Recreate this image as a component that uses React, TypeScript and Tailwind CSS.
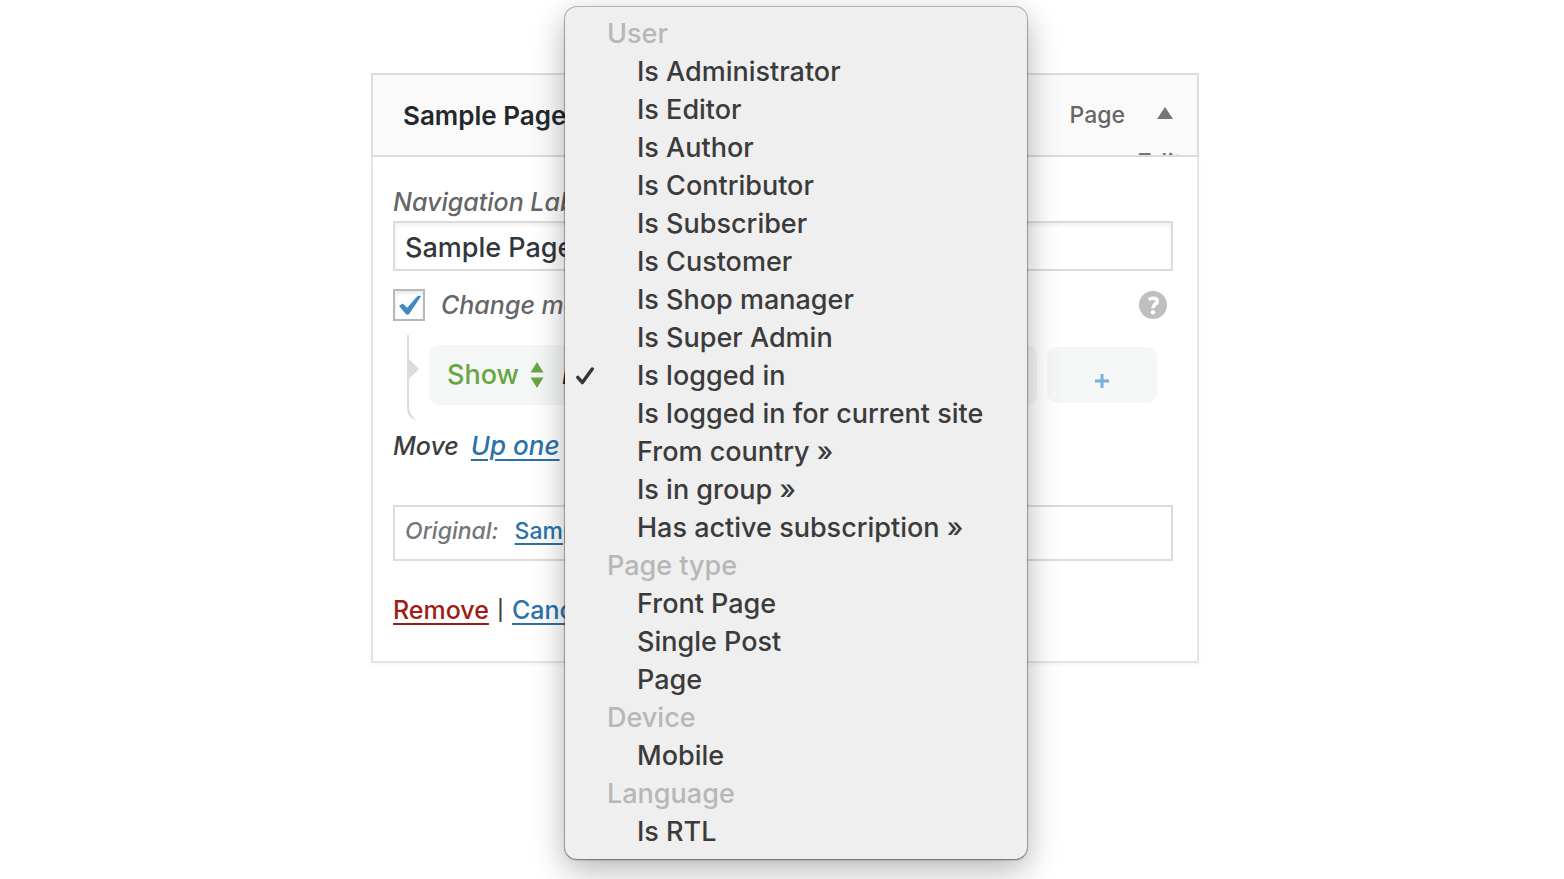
import { useState } from "react";

const groups = [
  {
    label: "User",
    items: [
      "Is Administrator",
      "Is Editor",
      "Is Author",
      "Is Contributor",
      "Is Subscriber",
      "Is Customer",
      "Is Shop manager",
      "Is Super Admin",
      "Is logged in",
      "Is logged in for current site",
      "From country »",
      "Is in group »",
      "Has active subscription »",
    ],
  },
  { label: "Page type", items: ["Front Page", "Single Post", "Page"] },
  { label: "Device", items: ["Mobile"] },
  { label: "Language", items: ["Is RTL"] },
];

function ConditionMenu() {
  const [selected, setSelected] = useState("Is logged in");
  return (
    <div
      role="listbox"
      aria-label="Condition"
      className="absolute -top-[66px] left-[194px] z-10 w-[462px] rounded-xl bg-[#efefef] py-2 text-[27px] leading-[38px] text-[#3b3b3b] shadow-[0_0_0_1px_rgba(0,0,0,0.24),0_1px_2px_rgba(0,0,0,0.3),0_10px_32px_rgba(0,0,0,0.3)]"
    >
      {groups.map((group) => (
        <div key={group.label} role="group" aria-label={group.label}>
          <div className="pl-[42px] text-[#b7b7b7]">{group.label}</div>
          {group.items.map((item) => (
            <button
              key={item}
              type="button"
              role="option"
              aria-selected={item === selected}
              onClick={() => setSelected(item)}
              className="flex w-full items-center text-left whitespace-nowrap"
            >
              <span className="flex w-[72px] shrink-0 pl-[11px]">
                {item === selected && (
                  <svg width="18" height="18" viewBox="0 0 18 18" fill="none" aria-hidden="true">
                    <path d="M1.8 10.4 6.4 15.6 16.2 2" stroke="#353535" strokeWidth="3.4" strokeLinecap="round" strokeLinejoin="round" />
                  </svg>
                )}
              </span>
              {item}
            </button>
          ))}
        </div>
      ))}
    </div>
  );
}

export default function App() {
  const [changed, setChanged] = useState(true);
  return (
    <main className="flex min-h-screen justify-center bg-white pt-[73px] pl-1.5 font-['Inter','Liberation_Sans',sans-serif] text-[25px] leading-[34px] font-medium text-[#3c3c3c]">
      <section className="relative h-fit w-full max-w-[828px]">
        <header className="flex h-[84px] items-start justify-between overflow-hidden border-2 border-[#dcdcdc] bg-[#fafafa] pr-6 pl-[30px]">
          <h2 className="pt-6 text-[26px] font-semibold text-[#23282d]">Sample Page</h2>
          <div className="flex">
            <span className="pt-[23px] text-[23px] text-[#666]">Page</span>
            <button type="button" className="flex w-12 flex-col items-end pt-8 text-[25px] text-[#72777c]">
              <svg width="16" height="12" viewBox="0 0 16 12" aria-hidden="true">
                <path d="M8 0 16 12H0Z" fill="#72777c" />
              </svg>
              <span className="mt-[27px] self-start pl-3">Edit</span>
            </button>
          </div>
        </header>

        <form
          onSubmit={(event) => event.preventDefault()}
          className="border-x-2 border-b-2 border-[#e5e5e5] bg-white pt-7 pr-6 pb-[34px] pl-5 shadow-[0_2px_4px_rgba(0,0,0,0.04)]"
        >
          <label htmlFor="nav-label" className="block text-[#666] italic">
            Navigation Label
          </label>
          <input
            id="nav-label"
            defaultValue="Sample Page"
            className="mt-0.5 block h-[50px] w-full border-2 border-[#dcdcdc] bg-white px-2.5 pt-0.5 text-[27px] text-[#32373c] shadow-[inset_0_2px_4px_rgba(0,0,0,0.07)] outline-none"
          />

          <div className="mt-[18px] flex h-8 items-center">
            <span className="relative flex size-8">
              <input
                id="visibility"
                type="checkbox"
                checked={changed}
                onChange={(event) => setChanged(event.target.checked)}
                className="size-8 appearance-none border-2 border-[#b4b9be] bg-white shadow-[inset_0_2px_4px_rgba(0,0,0,0.1)]"
              />
              {changed && (
                <svg width="32" height="32" viewBox="0 0 32 32" className="pointer-events-none absolute inset-0" aria-hidden="true">
                  <path d="M6 17 9.8 14.4 14.2 18.8 23.6 8Q25.5 6 28 7.2L16.2 25Q14.4 26.4 12.8 25Z" fill="#3f8abf" />
                </svg>
              )}
            </span>
            <label htmlFor="visibility" className="flex-1 pl-4 text-[#666] italic">
              Change menu item visibility
            </label>
            <button type="button" aria-label="Help" className="mr-1.5">
              <svg width="28" height="28" viewBox="0 0 28 28" aria-hidden="true">
                <circle cx="14" cy="14" r="14" fill="#bfbfbf" />
                <path d="M9.6 8.6C12.6 6.6 18.2 6.4 18.2 10.2C18.2 13.4 14 13 14 17.2" fill="none" stroke="#fff" strokeWidth="3.6" />
                <circle cx="14" cy="21.2" r="2.2" fill="#fff" />
              </svg>
            </button>
          </div>

          <div className="mt-3.5 flex h-[84px] items-start pl-3.5">
            <svg width="12" height="86" viewBox="0 0 12 86" className="shrink-0" aria-hidden="true">
              <path d="M0 0H2V70Q2 81 10 85Q0 84 0 71Z" fill="#dcdcdc" />
              <path d="M2 24 12 34 2 44Z" fill="#dcdcdc" />
            </svg>
            <div className="mt-2.5 ml-2.5 flex h-[60px] flex-1 items-center gap-2.5 pr-4">
              <div className="flex h-[60px] flex-1 items-center rounded-[10px] bg-[#f5f7f7] pl-[18px] text-[27px]">
                <span className="relative flex w-[97px] items-center">
                  <select
                    aria-label="Action"
                    className="w-full appearance-none bg-transparent text-[#67a642] outline-none"
                  >
                    <option>Show</option>
                    <option>Hide</option>
                  </select>
                  <svg width="14" height="26" viewBox="0 0 14 26" className="pointer-events-none absolute right-0" aria-hidden="true">
                    <path d="M7 0 13.5 10.5H.5ZM.5 15.5H13.5L7 26Z" fill="#67a642" />
                  </svg>
                </span>
                <span className="ml-[18px] text-[#23282d] italic">if</span>
              </div>
              <button
                type="button"
                aria-label="Add condition"
                className="flex h-14 w-[110px] items-center justify-center rounded-[10px] bg-[#f5f7f7] pt-3"
              >
                <svg width="14" height="14" viewBox="0 0 14 14" aria-hidden="true">
                  <path d="M7 0V14M0 7H14" stroke="#78aedd" strokeWidth="3" />
                </svg>
              </button>
            </div>
          </div>

          <p className="mt-2.5 flex gap-3 italic">
            <span>Move</span>
            <a href="#up" className="text-[26px] text-[#2a72aa] underline decoration-2 underline-offset-4">
              Up one
            </a>
          </p>

          <p className="mt-[42px] flex h-14 gap-4 border-2 border-[#dcdcdc] px-2.5 pt-[7px] text-[23px]">
            <span className="text-[#72777c] italic">Original:</span>
            <a href="#sample" className="text-[#2a72aa] underline decoration-2 underline-offset-4">
              Sample Page
            </a>
          </p>

          <p className="mt-8 flex gap-2">
            <a href="#remove" className="text-[#a01b12] underline decoration-2 underline-offset-4">
              Remove
            </a>
            <span className="text-[20px]">|</span>
            <a href="#cancel" className="text-[#2a72aa] underline decoration-2 underline-offset-4">
              Cancel
            </a>
          </p>
        </form>

        <ConditionMenu />
      </section>
    </main>
  );
}
